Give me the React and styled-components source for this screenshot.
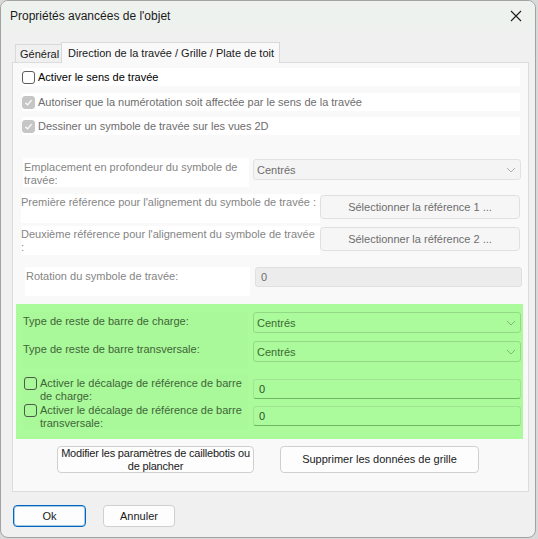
import React from 'react';
import styled, { createGlobalStyle } from 'styled-components';

const GlobalStyle = createGlobalStyle`
  html, body {
    margin: 0;
    padding: 0;
    background: #d9d9d9;
  }
  body {
    font-family: "Liberation Sans", Arial, sans-serif;
  }
`;

const Window = styled.div`
  width: 536px;
  height: 538px;
  box-sizing: border-box;
  border: 1px solid #a2a2a2;
  border-radius: 8px;
  overflow: hidden;
  background: #f0f0f0;
  display: flex;
  flex-direction: column;
`;

const TitleBar = styled.div`
  height: 30px;
  flex: none;
  background: #eef2ee;
  display: flex;
  align-items: center;
  justify-content: space-between;
  padding: 0 13px 0 9px;
  font-size: 12px;
  color: #1a1a1a;
`;

const CloseIcon = () => (
  <svg width="12" height="12" viewBox="0 0 12 12">
    <path d="M1 1 L11 11 M11 1 L1 11" stroke="#1c1c1c" strokeWidth="1.1" fill="none" />
  </svg>
);

const Content = styled.div`
  padding: 11px 6px 0 11px;
`;

const TabStrip = styled.div`
  height: 20px;
  display: flex;
  align-items: flex-end;
  padding-left: 3px;
`;

const Tab = styled.div`
  box-sizing: border-box;
  width: ${p => p.$w}px;
  height: ${p => (p.$active ? 21 : 18)}px;
  margin-bottom: ${p => (p.$active ? -1 : 0)}px;
  position: relative;
  z-index: ${p => (p.$active ? 1 : 0)};
  border: 1px solid #d9d9d9;
  border-bottom: none;
  border-right: ${p => (p.$active ? '1px solid #d9d9d9' : 'none')};
  background: ${p => (p.$active ? '#f9f9f9' : '#f0f0f0')};
  font-size: 11px;
  color: #1a1a1a;
  padding: ${p => (p.$active ? '4px 0 0 6px' : '3px 0 0 4px')};
  white-space: nowrap;
`;

const Panel = styled.div`
  box-sizing: border-box;
  height: 430px;
  border: 1px solid #dcdcdc;
  background: #f9f9f9;
  padding: 0 8px 0 8px;
  display: flex;
  flex-direction: column;
`;

const Strip = styled.div`
  height: 18px;
  margin: ${p => p.$mt}px 0 0 1px;
  background: #ffffff;
  display: flex;
  align-items: center;
  gap: 3px;
  font-size: 11px;
  color: ${p => (p.$disabled ? '#6d6d6d' : '#000')};
`;

const Box = styled.span`
  box-sizing: border-box;
  width: 13px;
  height: 13px;
  flex: none;
  border-radius: 3px;
  border: 1px solid ${p => (p.$checked ? '#c6c6c6' : p.$dark ? '#4d5a49' : '#5c5c5c')};
  background: ${p => (p.$checked ? '#c6c6c6' : 'transparent')};
  display: flex;
  align-items: center;
  justify-content: center;
`;

const Check = ({ checked, dark }) => (
  <Box $checked={checked} $dark={dark}>
    {checked && (
      <svg width="9" height="9" viewBox="0 0 9 9">
        <path d="M1.5 4.8 L3.6 6.8 L7.6 2.2" stroke="#ffffff" strokeWidth="1.2" fill="none" />
      </svg>
    )}
  </Box>
);

const Row = styled.div`
  display: flex;
  align-items: flex-start;
  margin-top: ${p => p.$mt || 0}px;
  padding-left: ${p => p.$indent || 0}px;
  margin-right: ${p => p.$right || 0}px;
`;

const Label = styled.div`
  box-sizing: border-box;
  width: ${p => p.$w}px;
  height: ${p => p.$h || 29}px;
  flex: none;
  margin-right: ${p => p.$gap || 0}px;
  background: ${p => (p.$green ? '#a9f89a' : '#ffffff')};
  font-size: 11px;
  line-height: 13px;
  color: ${p => (p.$green ? '#3f6637' : '#858585')};
  padding: ${p => p.$pad || '3px 1px 0 1px'};
  display: flex;
  gap: 3px;
`;

const Chevron = ({ color }) => (
  <svg width="10" height="6" viewBox="0 0 10 6">
    <path d="M1 1 L5 5 L9 1" stroke={color} strokeWidth="1" fill="none" />
  </svg>
);

const Select = styled.div`
  box-sizing: border-box;
  flex: 1;
  height: 21px;
  margin-top: ${p => p.$mt || 0}px;
  border-radius: 3px;
  border: 1px solid ${p => (p.$green ? '#94da86' : '#e2e2e2')};
  background: ${p => (p.$green ? '#abfa9c' : '#f4f4f4')};
  display: flex;
  align-items: center;
  justify-content: space-between;
  padding: 0 4px 0 3px;
  font-size: 11px;
  color: ${p => (p.$green ? '#3b6a31' : '#6d6d6d')};
`;

const Input = styled.div`
  box-sizing: border-box;
  flex: 1;
  height: 20px;
  margin-top: ${p => p.$mt || 0}px;
  border-radius: 3px;
  border: 1px solid ${p => (p.$green ? '#a0e593' : '#e0e0e0')};
  border-bottom-color: ${p => (p.$green ? '#6fb863' : '#e0e0e0')};
  background: ${p => (p.$green ? '#abfa9c' : '#ececec')};
  display: flex;
  align-items: center;
  padding-left: 5px;
  font-size: 11px;
  color: ${p => (p.$green ? '#2f4f2a' : '#6d6d6d')};
`;

const RefButton = styled.div`
  box-sizing: border-box;
  flex: 1;
  height: 24px;
  margin-top: 1px;
  border-radius: 4px;
  border: 1px solid #e0e0e0;
  background: #f6f6f6;
  display: flex;
  align-items: center;
  justify-content: center;
  font-size: 11px;
  color: #6d6d6d;
`;

const Green = styled.div`
  margin: 8px -3px 0 -5px;
  height: 135px;
  box-sizing: border-box;
  background: #abfa9c;
  padding: 8px 2px 0 7px;
`;

const ActionRow = styled.div`
  display: flex;
  gap: 26px;
  margin-top: 7px;
  padding-left: 36px;
`;

const Button = styled.div`
  box-sizing: border-box;
  width: ${p => p.$w}px;
  height: ${p => p.$h}px;
  border-radius: 4px;
  border: 1px solid ${p => (p.$primary ? '#0067c0' : '#d0d0d0')};
  box-shadow: ${p => (p.$primary ? 'inset 0 0 0 1px rgba(0,103,192,0.35)' : 'none')};
  background: #fdfdfd;
  display: flex;
  align-items: center;
  justify-content: center;
  text-align: center;
  white-space: nowrap;
  font-size: 11px;
  line-height: 13px;
  letter-spacing: ${p => p.$tight ? '-0.2px' : 'normal'};
  color: #1a1a1a;
`;

const Footer = styled.div`
  display: flex;
  gap: 17px;
  padding: 13px 0 0 12px;
`;

export default function App() {
  return (
    <>
      <GlobalStyle />
      <Window>
        <TitleBar>
          <span>Propriétés avancées de l'objet</span>
          <CloseIcon />
        </TitleBar>
        <Content>
          <TabStrip>
            <Tab $w={46}>Général</Tab>
            <Tab $w={219} $active>Direction de la travée / Grille / Plate de toit</Tab>
          </TabStrip>
          <Panel>
            <Strip $mt={5}>
              <Check />
              Activer le sens de travée
            </Strip>
            <Strip $mt={7} $disabled>
              <Check checked />
              Autoriser que la numérotation soit affectée par le sens de la travée
            </Strip>
            <Strip $mt={6} $disabled>
              <Check checked />
              Dessiner un symbole de travée sur les vues 2D
            </Strip>

            <Row $mt={23} $indent={2} $right={-1}>
              <Label $w={226} $gap={4}>Emplacement en profondeur du symbole de<br />travée:</Label>
              <Select $mt={1}>
                Centrés
                <Chevron color="#b0b0b0" />
              </Select>
            </Row>
            <Row $mt={7}>
              <Label $w={299} $pad="2px 0 0 0">Première référence pour l'alignement du symbole de travée :</Label>
              <RefButton>Sélectionner la référence 1 ...</RefButton>
            </Row>
            <Row $mt={3}>
              <Label $w={299} $pad="2px 0 0 0">Deuxième référence pour l'alignement du symbole de travée :</Label>
              <RefButton>Sélectionner la référence 2 ...</RefButton>
            </Row>
            <Row $mt={12} $indent={4} $right={-2}>
              <Label $w={225} $gap={5}>Rotation du symbole de travée:</Label>
              <Input>0</Input>
            </Row>

            <Green>
              <Row>
                <Label $w={225} $h={28} $gap={5} $green $pad="3px 0 0 0">Type de reste de barre de charge:</Label>
                <Select $green>
                  Centrés
                  <Chevron color="#7fb874" />
                </Select>
              </Row>
              <Row>
                <Label $w={225} $h={28} $gap={5} $green $pad="3px 0 0 0">Type de reste de barre transversale:</Label>
                <Select $green $mt={1}>
                  Centrés
                  <Chevron color="#7fb874" />
                </Select>
              </Row>
              <Row $mt={7}>
                <Label $w={225} $h={27} $gap={5} $green $pad="2px 0 0 1px">
                  <Check dark />
                  <span>Activer le décalage de référence de barre<br />de charge:</span>
                </Label>
                <Input $green $mt={4}>0</Input>
              </Row>
              <Row>
                <Label $w={225} $h={27} $gap={5} $green $pad="2px 0 0 1px">
                  <Check dark />
                  <span>Activer le décalage de référence de barre<br />transversale:</span>
                </Label>
                <Input $green $mt={4}>0</Input>
              </Row>
            </Green>

            <ActionRow>
              <Button $w={197} $h={27} $tight>Modifier les paramètres de caillebotis ou<br />de plancher</Button>
              <Button $w={199} $h={27}>Supprimer les données de grille</Button>
            </ActionRow>
          </Panel>
        </Content>
        <Footer>
          <Button $w={73} $h={22} $primary>Ok</Button>
          <Button $w={72} $h={22}>Annuler</Button>
        </Footer>
      </Window>
    </>
  );
}
